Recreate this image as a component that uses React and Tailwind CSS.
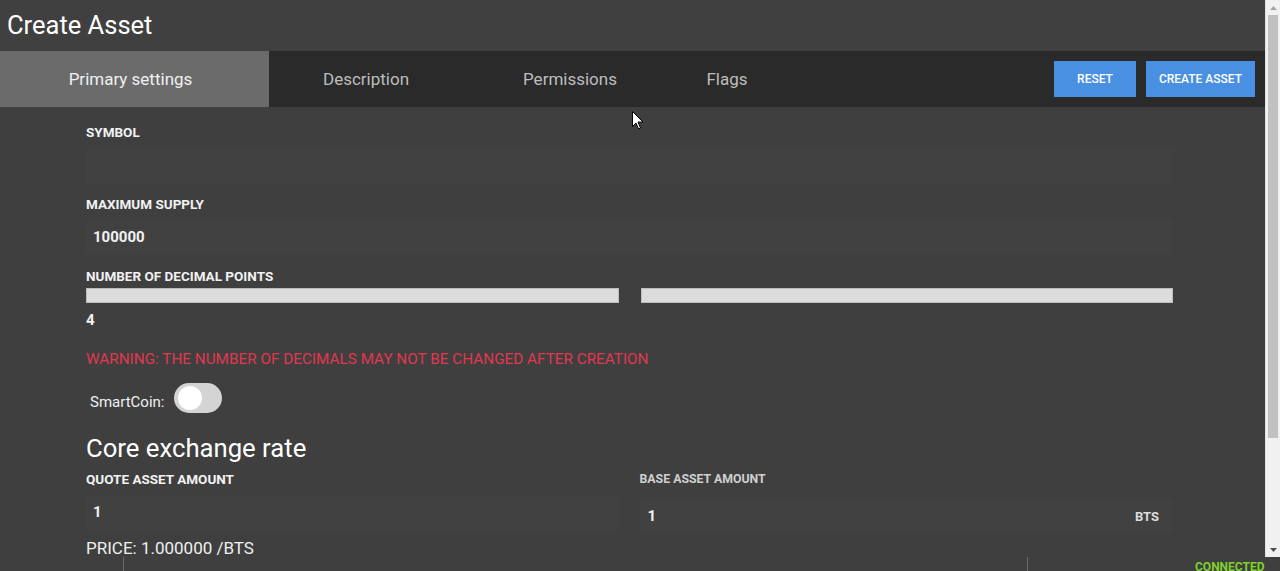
import React from "react";

const tabs = [
  { label: "Primary settings", width: "w-[269px]", active: true },
  { label: "Description", width: "w-[194px]" },
  { label: "Permissions", width: "w-[214px]" },
  { label: "Flags", width: "w-[100px]" },
];

function Label({ children, className = "" }) {
  return (
    <div className={`text-[13.5px] font-bold text-[#f2f2f2] uppercase leading-none ${className}`}>
      {children}
    </div>
  );
}

function Field({ value, className = "" }) {
  return (
    <div className={`h-[34px] bg-[#414141] flex items-center px-[7px] text-[15px] font-bold text-[#f2f2f2] ${className}`}>
      {value}
    </div>
  );
}

function Scrollbar() {
  return (
    <div className="w-[15px] h-full bg-[#f1f1f1] flex flex-col border-l border-[#e0e0e0]">
      <div className="h-[15px] flex items-center justify-center">
        <svg width="7" height="4" viewBox="0 0 7 4">
          <path d="M0 4 L3.5 0 L7 4 Z" fill="#a3a3a3" />
        </svg>
      </div>
      <div className="h-[423px] mx-[2px] bg-[#c1c1c1]" />
      <div className="flex-1" />
      <div className="h-[15px] flex items-center justify-center">
        <svg width="7" height="4" viewBox="0 0 7 4">
          <path d="M0 0 L7 0 L3.5 4 Z" fill="#505050" />
        </svg>
      </div>
    </div>
  );
}

export default function App() {
  return (
    <div className="relative h-[571px] w-[1280px] overflow-hidden bg-[#3f3f3f] font-['Roboto',sans-serif] flex flex-col">
      <div className="h-[563px] flex">
        <div className="flex-1 flex flex-col overflow-hidden">
          {/* header */}
          <div className="h-[51px] bg-[#404040] flex items-center pl-[7px]">
            <h1 className="text-[25.5px] text-white leading-none">Create Asset</h1>
          </div>

          {/* tabs */}
          <div className="h-[56px] bg-[#2a2a2a] flex items-center">
            {tabs.map((t) => (
              <div
                key={t.label}
                className={`${t.width} h-full flex items-center justify-center pt-[2px] text-[17px] ${
                  t.active ? "bg-[#6b6b6b] text-[#f0f0f0] pr-[8px]" : "text-[#bdbdbd]"
                }`}
              >
                {t.label}
              </div>
            ))}
            <div className="flex-1" />
            <div className="flex gap-[10px] pr-[10px]">
              <button className="h-[36px] w-[82px] bg-[#4a90e2] text-white text-[12px] font-medium">
                RESET
              </button>
              <button className="h-[36px] w-[109px] bg-[#4a90e2] text-white text-[12px] font-medium">
                CREATE ASSET
              </button>
            </div>
          </div>

          {/* form */}
          <div className="pl-[86px] w-[1173px]">
            <Label className="mt-[19px]">Symbol</Label>
            <Field value="" className="mt-[9px]" />
            <Label className="mt-[15px]">Maximum supply</Label>
            <Field value="100000" className="mt-[9px]" />
            <Label className="mt-[16px]">Number of decimal points</Label>
            <div className="mt-[4px] grid grid-cols-2 gap-[22px]">
              <div className="h-[15px] bg-[#dcdcdc] border border-[#bdbdbd]" />
              <div className="h-[15px] bg-[#dcdcdc] border border-[#bdbdbd]" />
            </div>
            <div className="mt-[10px] text-[15px] font-bold text-[#f2f2f2] leading-none">4</div>
            <div className="mt-[24px] text-[15.3px] text-[#e0384f] leading-none">
              WARNING: THE NUMBER OF DECIMALS MAY NOT BE CHANGED AFTER CREATION
            </div>
            <div className="mt-[15px] flex items-center gap-[10px] pl-[4px]">
              <span className="text-[15px] text-[#f0f0f0] mt-[9px]">SmartCoin:</span>
              <div className="w-[48px] h-[30px] rounded-full bg-[#d4d4d4] p-[2px] flex items-center">
                <div className="w-[24px] h-[24px] rounded-full bg-white ml-[2px]" />
              </div>
            </div>
            <h2 className="mt-[23px] text-[25.7px] text-white leading-none">Core exchange rate</h2>
            <div className="mt-[11px] grid grid-cols-2 gap-[20px]">
              <div>
                <Label>Quote asset amount</Label>
                <Field value="1" className="mt-[9px]" />
              </div>
              <div>
                <div className="text-[12.3px] font-bold text-[#d0d0d0] leading-none">BASE ASSET AMOUNT</div>
                <div className="mt-[14px] h-[34px] bg-[#414141] flex items-center pl-[8px] pr-[14px]">
                  <span className="text-[15px] font-bold text-[#f2f2f2]">1</span>
                  <span className="ml-auto text-[13px] font-bold text-[#dcdcdc]">BTS</span>
                </div>
              </div>
            </div>
            <div className="mt-[7px] text-[17px] text-[#f0f0f0] leading-none">PRICE: 1.000000 /BTS</div>
          </div>
        </div>
        <Scrollbar />
      </div>

      {/* footer strip, mostly scrolled out of view */}
      <div className="flex-1 flex bg-[#3f3f3f]">
        <div className="w-[123px]" />
        <div className="w-px bg-[#6a6a6a]" />
        <div className="w-[903px]" />
        <div className="w-px bg-[#6a6a6a]" />
        <div className="flex-1 pl-[167px] pt-[4px]">
          <span className="block text-[12px] font-bold text-[#7fd12b] leading-none">CONNECTED</span>
        </div>
      </div>

      {/* mouse cursor */}
      <svg className="absolute left-[632px] top-[111px]" width="12" height="19" viewBox="0 0 12 19">
        <path d="M0.5 0.5 L0.5 15.5 L4 12 L6.5 18 L8.5 17 L6 11 L11 11 Z" fill="#ffffff" stroke="#000000" strokeWidth="1" />
      </svg>
    </div>
  );
}
